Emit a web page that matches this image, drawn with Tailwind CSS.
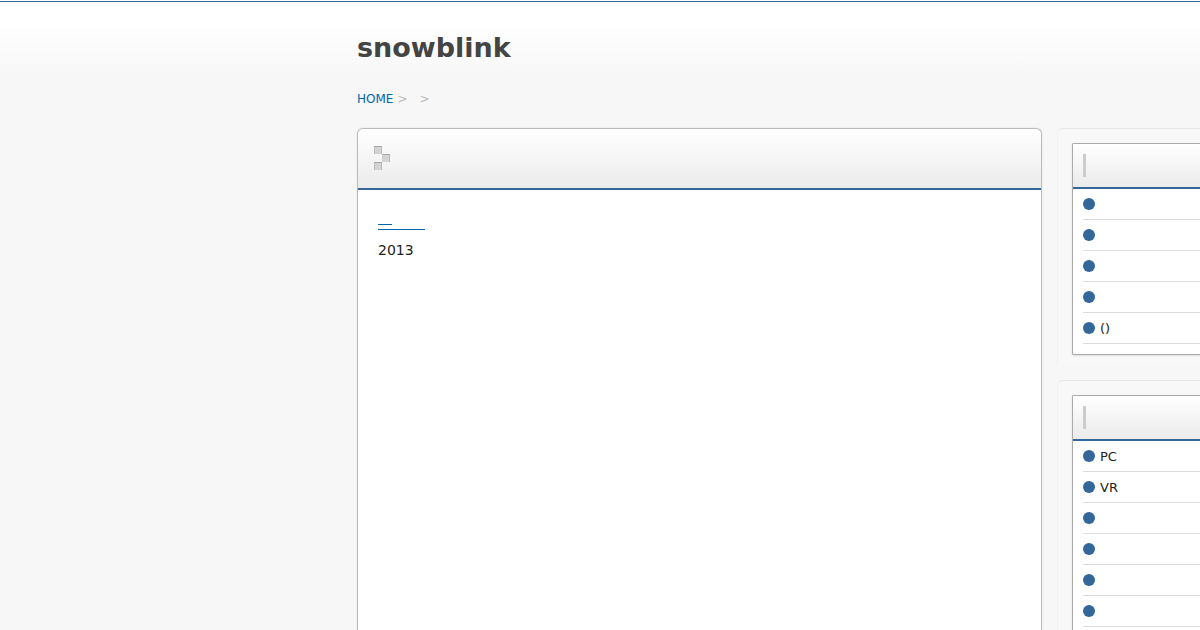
<!DOCTYPE html>
<html lang="ja">
<head>
<meta charset="utf-8">
<title>snowblink</title>
<script src="https://cdn.jsdelivr.net/npm/@tailwindcss/browser@4"></script>
</head>
<body class="min-h-screen overflow-x-hidden bg-[#f7f7f7] font-['DejaVu_Sans',sans-serif] text-[#222]">
<div class="flex min-h-screen flex-col bg-linear-to-b from-white from-[20px] to-[#f7f7f7] to-[76px]">
  <div class="h-0.5 border-b border-b-[#336699]"></div>
  <header class="pt-7 pl-[357px]">
    <h1 class="text-[27px] leading-9 font-bold text-[#444]"><a href="#">snowblink</a></h1>
    <nav aria-label="Breadcrumb" class="mt-[23px] flex h-[39px] text-xs leading-5 text-[#bbb]">
      <a href="#" class="mr-1 text-[#0066aa]">HOME</a><span class="mr-3">&gt;</span><span>&gt;</span>
    </nav>
  </header>
  <div class="flex flex-1 gap-[15px] pl-[357px]">
    <main class="min-w-0 flex-1 rounded-t-md border border-b-0 border-[#bbb] bg-white shadow-[0_0_2px_#ddd]">
      <div class="flex h-[61px] items-start rounded-t-md border-b-2 border-[#336699] bg-linear-to-b from-white to-[#ebebeb] px-4 pt-[17px]">
        <svg class="h-6 w-4" viewBox="0 0 16 24" shape-rendering="crispEdges" aria-hidden="true">
          <path fill="#d3d3d3" d="M0 0h8v8H0zM8 8h8v8H8zM0 16h8v8H0z"/>
          <path fill="#a8a8a8" d="M0 0h8v1H0zM8 8h8v1H8zM0 16h8v1H0z"/>
          <path fill="#bbb" d="M0 1h1v7H0zM7 1h1v7H7zM15 9h1v7h-1zM0 17h1v7H0zM7 17h1v7H7z"/>
        </svg>
      </div>
      <div class="px-5 pt-[34px]">
        <a href="#" aria-label="2013" class="block w-[47px]">
          <span class="block h-px w-3.5 bg-[#0066aa]"></span>
          <span class="mt-1 block h-px bg-[#0066aa]"></span>
        </a>
        <p class="mt-2.5 text-sm leading-5">2013</p>
      </div>
    </main>
    <aside class="flex w-[143px] shrink-0 flex-col gap-[15px]">
      <section class="rounded-tl-md border-t border-l border-[#e6e6e6] border-l-[#f0f0f0] bg-[#f8f8f8] pt-3.5 pb-2.5 pl-3.5">
        <div class="rounded-l-xs border border-r-0 border-[#aaa] bg-white pb-2.5 shadow-[0_1px_2px_#ddd]">
          <div class="flex h-[45px] items-center border-b-2 border-[#336699] bg-linear-to-b from-white to-[#ebebeb] pl-2.5"><span class="h-[23px] w-[3px] bg-[#ccc]"></span></div>
          <ul class="pl-2.5 text-[13px] leading-8">
            <li class="flex h-[31px] items-center gap-[5px] border-b border-[#ddd]"><span class="size-3 rounded-full bg-[#336699]"></span></li>
            <li class="flex h-[31px] items-center gap-[5px] border-b border-[#ddd]"><span class="size-3 rounded-full bg-[#336699]"></span></li>
            <li class="flex h-[31px] items-center gap-[5px] border-b border-[#ddd]"><span class="size-3 rounded-full bg-[#336699]"></span></li>
            <li class="flex h-[31px] items-center gap-[5px] border-b border-[#ddd]"><span class="size-3 rounded-full bg-[#336699]"></span></li>
            <li class="flex h-[31px] items-center gap-[5px] border-b border-[#ddd]"><span class="size-3 rounded-full bg-[#336699]"></span><a href="#" class="pt-0.5">()</a></li>
          </ul>
        </div>
      </section>
      <section class="flex-1 rounded-tl-md border-t border-l border-[#e6e6e6] border-l-[#f0f0f0] bg-[#f8f8f8] pt-3.5 pl-3.5">
        <div class="rounded-tl-xs border border-r-0 border-b-0 border-[#aaa] bg-white shadow-[0_1px_2px_#ddd]">
          <div class="flex h-[45px] items-center border-b-2 border-[#336699] bg-linear-to-b from-white to-[#ebebeb] pl-2.5"><span class="h-[23px] w-[3px] bg-[#ccc]"></span></div>
          <ul class="pb-[3px] pl-2.5 text-[13px] leading-8">
            <li class="flex h-[31px] items-center gap-[5px] border-b border-[#ddd]"><span class="size-3 rounded-full bg-[#336699]"></span><a href="#" class="pt-0.5">PC</a></li>
            <li class="flex h-[31px] items-center gap-[5px] border-b border-[#ddd]"><span class="size-3 rounded-full bg-[#336699]"></span><a href="#" class="pt-0.5">VR</a></li>
            <li class="flex h-[31px] items-center gap-[5px] border-b border-[#ddd]"><span class="size-3 rounded-full bg-[#336699]"></span></li>
            <li class="flex h-[31px] items-center gap-[5px] border-b border-[#ddd]"><span class="size-3 rounded-full bg-[#336699]"></span></li>
            <li class="flex h-[31px] items-center gap-[5px] border-b border-[#ddd]"><span class="size-3 rounded-full bg-[#336699]"></span></li>
            <li class="flex h-[31px] items-center gap-[5px] border-b border-[#ddd]"><span class="size-3 rounded-full bg-[#336699]"></span></li>
          </ul>
        </div>
      </section>
    </aside>
  </div>
</div>
</body>
</html>
